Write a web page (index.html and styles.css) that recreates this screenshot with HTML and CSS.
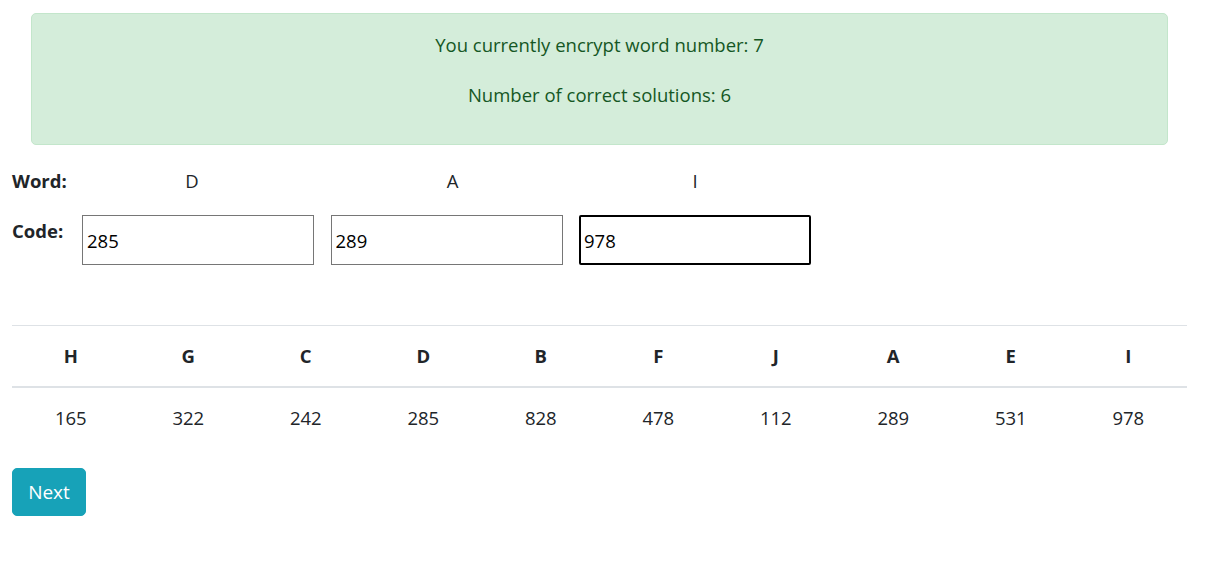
FILE: index.html
```html
<!DOCTYPE html>
<html lang="en">
<head>
<meta charset="utf-8">
<title>Encrypt</title>
<link rel="stylesheet" href="styles.css">
</head>
<body>
<div class="page">
  <div class="alert">
    <p class="alert-line">You currently encrypt word number: 7</p>
    <p class="alert-line">Number of correct solutions: 6</p>
  </div>

  <div class="form">
    <div class="label">Word:</div>
    <div class="letter letter-first">D</div>
    <div class="letter letter-second">A</div>
    <div class="letter">I</div>

    <div class="label label-code">Code:</div>
    <input class="code" type="text" value="285">
    <input class="code" type="text" value="289">
    <input class="code focused" type="text" value="978">
  </div>

  <table class="keys">
    <thead>
      <tr><th>H</th><th>G</th><th>C</th><th>D</th><th>B</th><th>F</th><th>J</th><th>A</th><th>E</th><th>I</th></tr>
    </thead>
    <tbody>
      <tr><td>165</td><td>322</td><td>242</td><td>285</td><td>828</td><td>478</td><td>112</td><td>289</td><td>531</td><td>978</td></tr>
    </tbody>
  </table>

  <button class="btn-next" type="button">Next</button>
</div>
</body>
</html>
```

FILE: styles.css
```css
html, body {
  margin: 0;
  padding: 0;
  background: #fff;
}

body {
  font-family: "Open Sans", "Noto Sans", sans-serif;
  font-size: 18.5px;
  line-height: 30px;
  color: #212529;
}

.page {
  width: 1175px;
  padding: 13px 12px 0 12px;
}

.alert {
  margin: 0 19px;
  background: #d4edda;
  border: 1px solid #c3e6cb;
  border-radius: 5px;
  color: #155724;
  text-align: center;
  padding: 16px 25px 14px;
}

.alert-line {
  margin: 0 0 20px 0;
}

.form {
  display: grid;
  grid-template-columns: 53.5px 232px 232px 232px;
  column-gap: 16.5px;
  row-gap: 19px;
  margin-top: 21px;
  align-items: start;
}

.label {
  font-weight: 700;
  line-height: 30px;
  white-space: nowrap;
}

.label-code {
  margin-top: 1px;
}

.letter {
  text-align: center;
  line-height: 30px;
}

.letter-first {
  padding-right: 12px;
}

.letter-second {
  padding-left: 12px;
}

.code {
  box-sizing: border-box;
  width: 232px;
  height: 50px;
  margin: 0;
  border: 1px solid #767676;
  border-radius: 0;
  padding: 0 4px;
  font-family: inherit;
  font-size: 18.5px;
  color: #000;
  background: #fff;
  outline: none;
}

.code.focused {
  border: 2px solid #000;
  border-radius: 2px;
  padding: 0 3px;
}

.keys {
  width: 1175px;
  margin-top: 60px;
  border-collapse: collapse;
  table-layout: fixed;
}

.keys th {
  font-weight: 700;
  text-align: center;
  padding: 15px 0;
  border-top: 1px solid #dee2e6;
  border-bottom: 2px solid #dee2e6;
  line-height: 30px;
}

.keys td {
  text-align: center;
  padding: 15px 0;
  line-height: 30px;
}

.btn-next {
  margin-top: 20px;
  display: block;
  box-sizing: border-box;
  width: 74px;
  height: 48px;
  background: #17a2b8;
  border: 1px solid #17a2b8;
  border-radius: 5px;
  color: #fff;
  font-family: inherit;
  font-size: 19px;
  padding: 0;
  line-height: 30px;
}
```
